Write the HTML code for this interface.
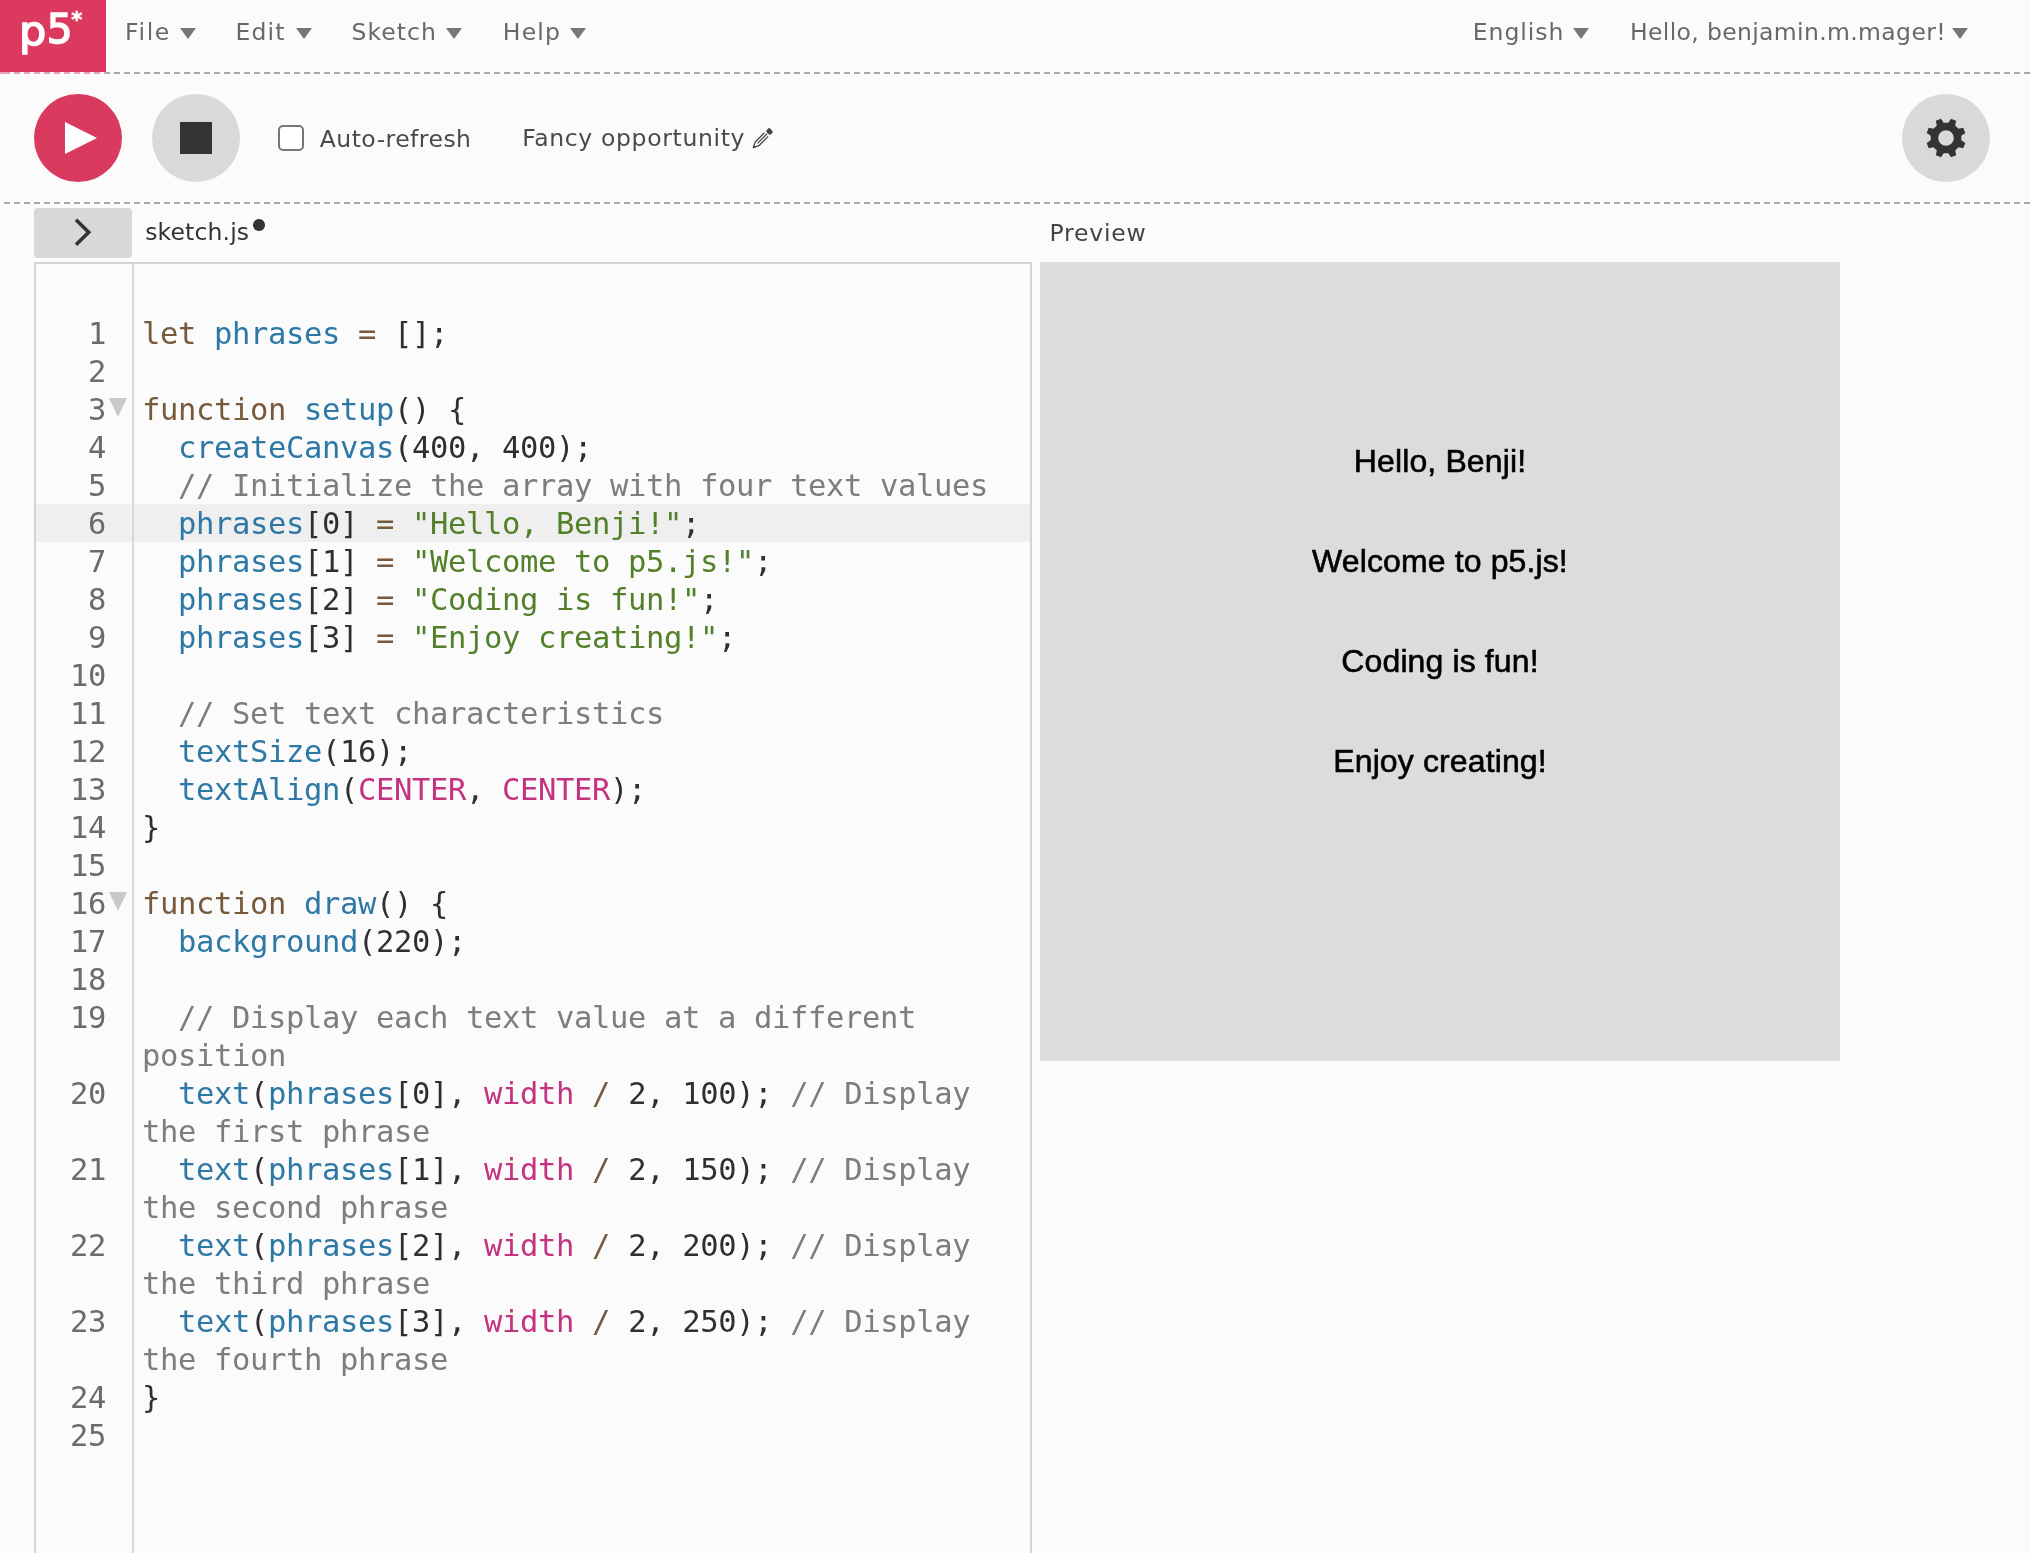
<!DOCTYPE html>
<html lang="en"><head><meta charset="utf-8"><title>p5.js Web Editor | Fancy opportunity</title>
<style>
*{box-sizing:border-box;margin:0;padding:0}
html,body{width:2030px;height:1553px;overflow:hidden;background:#fbfbfb}
body{position:relative;font-family:"DejaVu Sans","Liberation Sans",sans-serif;font-size:23.5px;line-height:28px;color:#333}
#root{position:absolute;left:0;top:0;width:2030px;height:1553px;will-change:transform}
.abs{position:absolute;white-space:pre}
.logo{position:absolute;left:0;top:0;width:106px;height:72px;background:#db395e}
.logo>span{position:absolute;font-size:40.6px;line-height:50px;color:#fff;-webkit-text-stroke:1.5px #fff}
.logo sup{position:absolute;font-size:21px;line-height:30px;color:#fff;font-weight:bold;-webkit-text-stroke:0.6px #fff}
.dash{position:absolute;height:2px;background-image:repeating-linear-gradient(90deg,#a9a9a9 0 6px,transparent 6px 10px)}
.nav{color:#686868}
.fn{color:#333}.pv{color:#444}
.tri{position:absolute;width:0;height:0;border-left:8.75px solid transparent;border-right:8.75px solid transparent;border-top:11.6px solid #777;top:28.1px}
.circ{position:absolute;width:88px;height:88px;border-radius:50%;top:94px}
.tb{color:#4a4a4a}
.chk{position:absolute;left:278px;top:125px;width:26px;height:26px;border:2px solid #767676;border-radius:5px;background:#fff}
.collapse{position:absolute;left:34px;top:208px;width:98px;height:50px;background:#d8d8d8;border-radius:4px}
.editor{position:absolute;left:34px;top:262px;width:998px;height:1300px;border:2px solid #d4d4d4;border-bottom:none}
.gutline{position:absolute;left:132px;top:264px;width:2px;height:1300px;background:#d9d9d9}
.row{position:absolute;left:36px;width:994px;height:38px;line-height:38px;font-family:"DejaVu Sans Mono","Liberation Mono",monospace;font-size:30.5px;letter-spacing:-0.361px;white-space:pre;color:#2f2f2f}
.row.hl{background:#efefef}
.ln{position:absolute;right:924px;top:1px;color:#6b6b6b}
.cd{position:absolute;left:106px;top:1px}
.row b{font-weight:normal}
.k{color:#77593c}.v{color:#2e78a6}.s{color:#53812a}.c{color:#7d7d7d}.a{color:#c4337f}.o{color:#77593c}
.fold{position:absolute;left:73px;top:8px;width:0;height:0;border-left:9.5px solid transparent;border-right:9.5px solid transparent;border-top:19px solid #c9c9c9}
.canvas{position:absolute;left:1040px;top:262px;width:800px;height:799px;background:#dcdcdc}
.ct{position:absolute;left:0;width:800px;text-align:center;font-family:"Liberation Sans",sans-serif;font-size:32px;line-height:36px;color:#000;white-space:pre;letter-spacing:0.12px;-webkit-text-stroke:0.6px #000}
</style></head><body><div id="root">
<div class="dash" style="left:106px;top:72px;width:1924px;background-position:-2px 0"></div><div class="dash" style="left:0;top:72px;width:106px;background-position:4px 0;background-image:repeating-linear-gradient(90deg,#e9a3b3 0 6px,transparent 6px 10px)"></div>
<div class="logo"><span style="left:17.57px;top:4.4px;letter-spacing:3.418px"><span style="position:relative;left:1.3px;top:1.6px;display:inline-block;transform:scaleX(1.06);transform-origin:left center">p</span>5</span><sup style="left:71.3px;top:5.2px">*</sup></div>
<div class="abs nav" style="left:125.04px;top:17.85px;letter-spacing:1.649px">File</div>
<div class="abs nav" style="left:235.44px;top:17.85px;letter-spacing:1.192px">Edit</div>
<div class="abs nav" style="left:351.59px;top:17.85px;letter-spacing:1.045px">Sketch</div>
<div class="abs nav" style="left:502.74px;top:17.85px;letter-spacing:1.235px">Help</div>
<div class="abs nav" style="left:1472.74px;top:17.6px;letter-spacing:0.966px">English</div>
<div class="abs nav" style="left:1629.94px;top:17.6px;letter-spacing:0.352px">Hello, benjamin.m.mager!</div>
<div class="abs tb" style="left:319.78px;top:124.5px;letter-spacing:0.467px">Auto-refresh</div>
<div class="abs tb" style="left:522.14px;top:123.9px;letter-spacing:0.653px">Fancy opportunity</div>
<div class="abs fn" style="left:145.15px;top:218.3px;letter-spacing:0.152px">sketch.js</div>
<div class="abs pv" style="left:1049.54px;top:218.6px;letter-spacing:0.786px">Preview</div>
<i class="tri" style="left:179.5px"></i>
<i class="tri" style="left:296px"></i>
<i class="tri" style="left:445.8px"></i>
<i class="tri" style="left:570.3px"></i>
<i class="tri" style="left:1573.4px"></i>
<i class="tri" style="left:1952.4px"></i>

<div class="circ" style="left:34px;background:#db3a5f"></div>
<svg class="abs" style="left:34px;top:94px" width="88" height="88" viewBox="0 0 88 88"><path d="M31 28 L63 44 L31 60 Z" fill="#fff"/></svg>
<div class="circ" style="left:152px;background:#d9d9d9"></div>
<div class="abs" style="left:180px;top:122px;width:32px;height:32px;background:#333"></div>
<div class="chk"></div>
<svg class="abs" style="left:745px;top:120px" width="36" height="36" viewBox="0 0 36 36"><g transform="translate(8.3 27.6) rotate(-45)"><path d="M18.4 -2.6 L5.3 -2.6 L0 0 L5.3 2.6 L18.4 2.6" fill="none" stroke="#444" stroke-width="1.25" stroke-linejoin="round"/><path d="M5.9 0 L19.6 0" fill="none" stroke="#444" stroke-width="1.2"/><path d="M-0.6 0 L2.4 -1.4 L2.4 1.4 Z" fill="#444"/><rect x="20.4" y="-3" width="5" height="6" rx="1.6" fill="#444"/></g></svg>
<div class="circ" style="left:1902px;background:#d9d9d9"></div>
<svg class="abs" style="left:1902px;top:94px" width="88" height="88" viewBox="0 0 88 88"><path fill-rule="evenodd" fill="#333" d="M59.32 46.36 L63.36 49.00 L61.23 54.16 L56.50 53.17 L53.17 56.50 L54.16 61.23 L49.00 63.36 L46.36 59.32 L41.64 59.32 L39.00 63.36 L33.84 61.23 L34.83 56.50 L31.50 53.17 L26.77 54.16 L24.64 49.00 L28.68 46.36 L28.68 41.64 L24.64 39.00 L26.77 33.84 L31.50 34.83 L34.83 31.50 L33.84 26.77 L39.00 24.64 L41.64 28.68 L46.36 28.68 L49.00 24.64 L54.16 26.77 L53.17 31.50 L56.50 34.83 L61.23 33.84 L63.36 39.00 L59.32 41.64 Z M51.8 44 A7.8 7.8 0 1 0 36.2 44 A7.8 7.8 0 1 0 51.8 44 Z"/></svg>

<div class="dash" style="left:4px;top:202px;width:2026px"></div>
<div class="collapse"></div>
<svg class="abs" style="left:34px;top:208px" width="98" height="50" viewBox="0 0 98 50"><path d="M42 11.8 L54.7 24.3 L42 36.8" fill="none" stroke="#333" stroke-width="3.6"/></svg>
<div class="abs" style="left:253.3px;top:219.2px;width:11.6px;height:11.6px;border-radius:50%;background:#333"></div>

<div class="editor"></div>
<div class="row" style="top:314px"><span class="ln">1</span><span class="cd"><b class="k">let</b> <b class="v">phrases</b> <b class="o">=</b> [];</span></div>
<div class="row" style="top:352px"><span class="ln">2</span><span class="cd"></span></div>
<div class="row" style="top:390px"><span class="ln">3</span><i class="fold"></i><span class="cd"><b class="k">function</b> <b class="v">setup</b>() {</span></div>
<div class="row" style="top:428px"><span class="ln">4</span><span class="cd">  <b class="v">createCanvas</b>(400, 400);</span></div>
<div class="row" style="top:466px"><span class="ln">5</span><span class="cd">  <b class="c">// Initialize the array with four text values</b></span></div>
<div class="row hl" style="top:504px"><span class="ln">6</span><span class="cd">  <b class="v">phrases</b>[0] <b class="o">=</b> <b class="s">"Hello, Benji!"</b>;</span></div>
<div class="row" style="top:542px"><span class="ln">7</span><span class="cd">  <b class="v">phrases</b>[1] <b class="o">=</b> <b class="s">"Welcome to p5.js!"</b>;</span></div>
<div class="row" style="top:580px"><span class="ln">8</span><span class="cd">  <b class="v">phrases</b>[2] <b class="o">=</b> <b class="s">"Coding is fun!"</b>;</span></div>
<div class="row" style="top:618px"><span class="ln">9</span><span class="cd">  <b class="v">phrases</b>[3] <b class="o">=</b> <b class="s">"Enjoy creating!"</b>;</span></div>
<div class="row" style="top:656px"><span class="ln">10</span><span class="cd"></span></div>
<div class="row" style="top:694px"><span class="ln">11</span><span class="cd">  <b class="c">// Set text characteristics</b></span></div>
<div class="row" style="top:732px"><span class="ln">12</span><span class="cd">  <b class="v">textSize</b>(16);</span></div>
<div class="row" style="top:770px"><span class="ln">13</span><span class="cd">  <b class="v">textAlign</b>(<b class="a">CENTER</b>, <b class="a">CENTER</b>);</span></div>
<div class="row" style="top:808px"><span class="ln">14</span><span class="cd">}</span></div>
<div class="row" style="top:846px"><span class="ln">15</span><span class="cd"></span></div>
<div class="row" style="top:884px"><span class="ln">16</span><i class="fold"></i><span class="cd"><b class="k">function</b> <b class="v">draw</b>() {</span></div>
<div class="row" style="top:922px"><span class="ln">17</span><span class="cd">  <b class="v">background</b>(220);</span></div>
<div class="row" style="top:960px"><span class="ln">18</span><span class="cd"></span></div>
<div class="row" style="top:998px"><span class="ln">19</span><span class="cd">  <b class="c">// Display each text value at a different</b></span></div>
<div class="row" style="top:1036px"><span class="cd"><b class="c">position</b></span></div>
<div class="row" style="top:1074px"><span class="ln">20</span><span class="cd">  <b class="v">text</b>(<b class="v">phrases</b>[0], <b class="a">width</b> <b class="o">/</b> 2, 100); <b class="c">// Display</b></span></div>
<div class="row" style="top:1112px"><span class="cd"><b class="c">the first phrase</b></span></div>
<div class="row" style="top:1150px"><span class="ln">21</span><span class="cd">  <b class="v">text</b>(<b class="v">phrases</b>[1], <b class="a">width</b> <b class="o">/</b> 2, 150); <b class="c">// Display</b></span></div>
<div class="row" style="top:1188px"><span class="cd"><b class="c">the second phrase</b></span></div>
<div class="row" style="top:1226px"><span class="ln">22</span><span class="cd">  <b class="v">text</b>(<b class="v">phrases</b>[2], <b class="a">width</b> <b class="o">/</b> 2, 200); <b class="c">// Display</b></span></div>
<div class="row" style="top:1264px"><span class="cd"><b class="c">the third phrase</b></span></div>
<div class="row" style="top:1302px"><span class="ln">23</span><span class="cd">  <b class="v">text</b>(<b class="v">phrases</b>[3], <b class="a">width</b> <b class="o">/</b> 2, 250); <b class="c">// Display</b></span></div>
<div class="row" style="top:1340px"><span class="cd"><b class="c">the fourth phrase</b></span></div>
<div class="row" style="top:1378px"><span class="ln">24</span><span class="cd">}</span></div>
<div class="row" style="top:1416px"><span class="ln">25</span><span class="cd"></span></div>
<div class="gutline"></div>

<div class="canvas">
<div class="ct" style="top:180.5px">Hello, Benji!</div>
<div class="ct" style="top:280.5px">Welcome to p5.js!</div>
<div class="ct" style="top:380.5px">Coding is fun!</div>
<div class="ct" style="top:480.5px">Enjoy creating!</div>
</div>
</div></body></html>
